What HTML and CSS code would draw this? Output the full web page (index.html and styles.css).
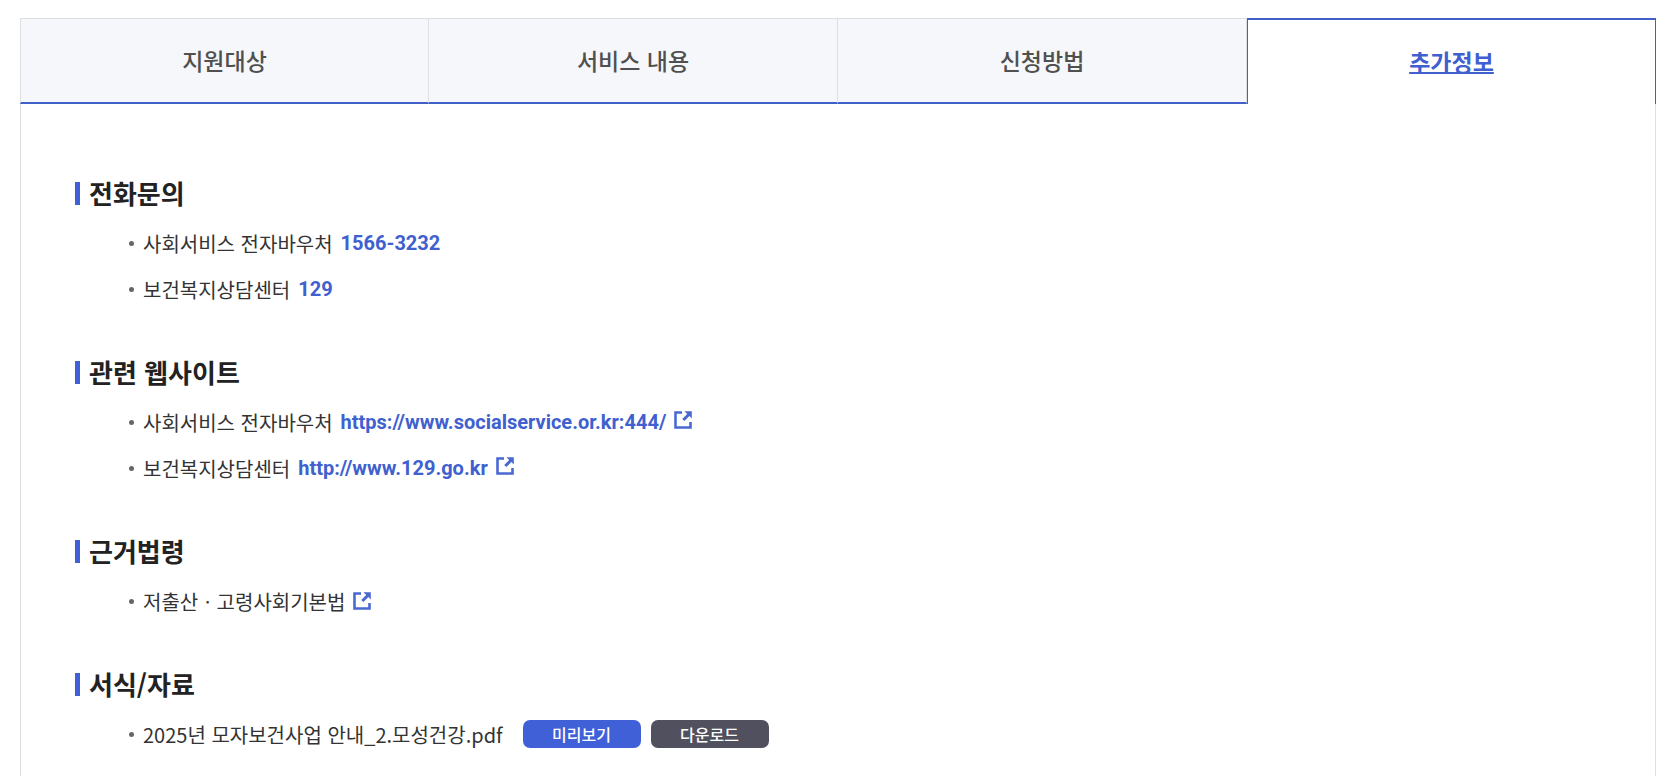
FILE: index.html
```html
<!DOCTYPE html>
<html lang="ko">
<head>
<meta charset="utf-8">
<meta name="viewport" content="width=device-width, initial-scale=1">
<title>추가정보</title>
<link rel="stylesheet" href="styles.css">
</head>
<body>
<svg width="0" height="0" class="sprite" aria-hidden="true">
  <symbol id="ext" viewBox="0 0 18 18">
    <path d="M8 1.500H1.500v15h15V11" fill="none" stroke="currentColor" stroke-width="2.600"/>
    <path d="M10.500 0.200h7.300v7.300l-2.400-2.400-5 5-2.200-2.200 5-5z" fill="currentColor"/>
  </symbol>
</svg>
<main class="service">
  <nav class="tabs">
    <a class="tab" href="#target">지원대상</a>
    <a class="tab" href="#content">서비스 내용</a>
    <a class="tab" href="#apply">신청방법</a>
    <a class="tab tab-active" href="#info" aria-current="page">추가정보</a>
  </nav>
  <div class="panel" id="info">
    <section class="group">
      <h2 class="group-title">전화문의</h2>
      <ul class="list">
        <li class="item">사회서비스 전자바우처 <a class="link" href="tel:1566-3232">1566-3232</a></li>
        <li class="item">보건복지상담센터 <a class="link" href="tel:129">129</a></li>
      </ul>
    </section>
    <section class="group">
      <h2 class="group-title">관련 웹사이트</h2>
      <ul class="list">
        <li class="item">사회서비스 전자바우처 <a class="link" href="https://www.socialservice.or.kr:444/">https://www.socialservice.or.kr:444/<svg class="ext" aria-hidden="true"><use href="#ext"/></svg></a></li>
        <li class="item">보건복지상담센터 <a class="link" href="http://www.129.go.kr">http://www.129.go.kr<svg class="ext" aria-hidden="true"><use href="#ext"/></svg></a></li>
      </ul>
    </section>
    <section class="group">
      <h2 class="group-title">근거법령</h2>
      <ul class="list">
        <li class="item"><a class="law" href="#law">저출산ㆍ고령사회기본법<svg class="ext" aria-hidden="true"><use href="#ext"/></svg></a></li>
      </ul>
    </section>
    <section class="group">
      <h2 class="group-title">서식/자료</h2>
      <ul class="list">
        <li class="item">2025년 모자보건사업 안내_2.모성건강.pdf
          <span class="actions"><button class="btn btn-view" type="button">미리보기</button><button class="btn btn-down" type="button">다운로드</button></span></li>
      </ul>
    </section>
  </div>
</main>
</body>
</html>
```

FILE: styles.css
```css
* { box-sizing: border-box; }

body {
  margin: 0;
  background: #fff;
  color: #333;
  font-family: "Noto Sans CJK KR", sans-serif;
  font-size: 20px;
}

.sprite { position: absolute; }

.service {
  display: flex;
  flex-direction: column;
  min-height: 100vh;
  padding: 18px 16px 0 20px;
}

.tabs {
  display: grid;
  grid-template-columns: repeat(4, 1fr);
}

.tab {
  display: flex;
  align-items: center;
  justify-content: center;
  height: 86px;
  padding-bottom: 2px;
  border: 1px solid #dedfe2;
  border-left: 0;
  border-bottom: 2px solid #4060c8;
  background: #f5f7fb;
  color: #505050;
  font-size: 23px;
  font-weight: 500;
  text-decoration: none;
}

.tab:first-child { border-left: 1px solid #dedfe2; }

.tab-active {
  border: 1px solid #4060c8;
  border-top-width: 2px;
  border-bottom: 0;
  background: #fff;
  color: #4060d0;
  font-weight: 700;
  text-decoration: underline;
  text-decoration-thickness: 2px;
}

.panel {
  flex: 1;
  padding: 71px 54px 0;
  border: solid #dedfe2;
  border-width: 0 1px;
}

.group { margin-bottom: 42px; }
.group:last-child { margin-bottom: 0; }

.group-title {
  display: flex;
  align-items: center;
  gap: 9px;
  height: 36px;
  margin: 0 0 9px;
  color: #222;
  font-size: 26px;
  font-weight: 700;
  line-height: 36px;
}

.group-title::before {
  content: "";
  width: 5px;
  height: 23px;
  background: #4060d8;
}

.list {
  margin: 0;
  padding: 0 0 0 54px;
  list-style: none;
}

.item {
  display: flex;
  align-items: center;
  min-height: 46px;
}

.item::before {
  content: "";
  width: 5px;
  height: 5px;
  margin-right: 9px;
  border-radius: 50%;
  background: #666;
}

.link {
  margin-left: 8px;
  color: #4060d0;
  font-family: Roboto, "Noto Sans CJK KR", sans-serif;
  font-weight: 700;
  text-decoration: none;
}

.law {
  color: inherit;
  text-decoration: none;
}

.ext {
  width: 18px;
  height: 18px;
  margin-left: 8px;
  color: #4a68d2;
}

.actions {
  display: flex;
  gap: 10px;
  margin-left: 20px;
}

.btn {
  width: 118px;
  height: 28px;
  padding: 0;
  border: 0;
  border-radius: 7px;
  color: #fff;
  font-family: inherit;
  font-size: 16px;
  font-weight: 500;
  line-height: 28px;
}

.btn-view { background: #4060d8; }
.btn-down { background: #50505e; }
```
